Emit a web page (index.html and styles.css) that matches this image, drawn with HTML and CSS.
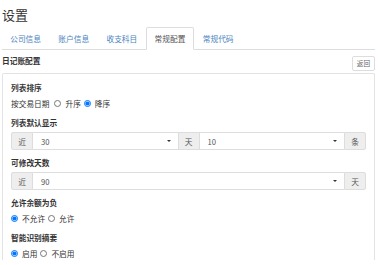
FILE: index.html
```html
<!DOCTYPE html>
<html lang="zh-CN">
<head>
  <meta charset="UTF-8" />
  <meta name="viewport" content="width=device-width, initial-scale=1.0" />
  <title>设置</title>
  <link rel="stylesheet" href="styles.css">
</head>
<body>
  <div class="page">
    <h3 class="page-title">设置</h3>
    <ul class="tabs">
      <li><a href="#">公司信息</a></li>
      <li><a href="#">账户信息</a></li>
      <li><a href="#">收支科目</a></li>
      <li class="active"><a href="#">常规配置</a></li>
      <li><a href="#">常规代码</a></li>
    </ul>
    <div class="section-head">
      <span class="section-title">日记账配置</span>
      <button class="btn">返回</button>
    </div>
    <div class="panel">
      <div class="group">
        <div class="group-label">列表排序</div>
        <div class="radios">
          <span class="radio-prefix">按交易日期</span>
          <label class="radio"><input type="radio" name="sort">升序</label>
          <label class="radio"><input type="radio" name="sort" checked>降序</label>
        </div>
      </div>
      <div class="group">
        <div class="group-label">列表默认显示</div>
        <div class="input-group">
          <span class="addon">近</span>
          <div class="select"><span>30</span><span class="caret"></span></div>
          <span class="addon">天</span>
          <div class="select"><span>10</span><span class="caret"></span></div>
          <span class="addon">条</span>
        </div>
      </div>
      <div class="group">
        <div class="group-label">可修改天数</div>
        <div class="input-group">
          <span class="addon">近</span>
          <div class="select"><span>90</span><span class="caret"></span></div>
          <span class="addon">天</span>
        </div>
      </div>
      <div class="group">
        <div class="group-label">允许余额为负</div>
        <div class="radios">
          <label class="radio"><input type="radio" name="negative" checked>不允许</label>
          <label class="radio"><input type="radio" name="negative">允许</label>
        </div>
      </div>
      <div class="group">
        <div class="group-label">智能识别摘要</div>
        <div class="radios">
          <label class="radio"><input type="radio" name="smart" checked>启用</label>
          <label class="radio"><input type="radio" name="smart">不启用</label>
        </div>
      </div>
    </div>
  </div>
</body>
</html>
```

FILE: styles.css
```css
body {
  margin: 0;
  font-family: "Noto Sans CJK SC", "Noto Sans", sans-serif;
  font-size: 7.7px;
  color: #333;
  background-color: white;
}
.page {
  padding: 0 3px 0 2px;
}
.page-title {
  margin: 7px 0 5px;
  font-size: 13px;
  line-height: 15px;
  font-weight: normal;
  color: #333;
}
.tabs {
  display: flex;
  list-style: none;
  margin: 0;
  padding: 0;
  border-bottom: 1px solid #ddd;
}
.tabs li {
  margin-right: 1px;
  margin-bottom: -1px;
}
.tabs a {
  display: block;
  padding: 5px 7.2px;
  line-height: 11px;
  border: 1px solid transparent;
  border-radius: 2px 2px 0 0;
  color: #4a84c0;
  text-decoration: none;
}
.tabs li.active a {
  color: #555;
  background-color: white;
  border-color: #ddd #ddd transparent;
}
.section-head {
  display: flex;
  justify-content: space-between;
  align-items: flex-start;
  padding-top: 5px;
  margin-bottom: 2px;
}
.section-title {
  font-weight: bold;
  line-height: 11px;
}
.btn {
  margin-top: 1px;
  padding: 2px 4px;
  font-family: inherit;
  font-size: 6.6px;
  line-height: 9px;
  color: #666;
  background-color: white;
  border: 1px solid #ddd;
  border-radius: 2px;
}
.panel {
  border: 1px solid #e3e3e3;
  border-bottom: none;
  border-radius: 2px 2px 0 0;
  padding: 8px 8px 0;
  background-color: white;
}
.group {
  margin-bottom: 7px;
}
.group-label {
  font-weight: bold;
  line-height: 11px;
  margin-bottom: 4px;
}
.radios {
  display: flex;
  align-items: center;
  height: 13px;
}
.radio-prefix {
  margin-right: 5px;
}
.radio {
  display: inline-flex;
  align-items: center;
  margin-right: 3px;
}
.radio input {
  width: 7px;
  height: 7px;
  margin: 0 4px 0 0;
}
.input-group {
  display: flex;
  height: 18px;
}
.addon {
  display: flex;
  align-items: center;
  justify-content: center;
  width: 20px;
  flex: none;
  background-color: #eee;
  color: #555;
  border: 1px solid #ddd;
}
.addon:first-child {
  border-radius: 2px 0 0 2px;
}
.addon:last-child {
  border-radius: 0 2px 2px 0;
}
.select {
  flex: 1;
  display: flex;
  align-items: center;
  justify-content: space-between;
  padding: 0 7px 0 8px;
  border-top: 1px solid #ddd;
  border-bottom: 1px solid #ddd;
  color: #555;
}
.caret {
  width: 0;
  height: 0;
  border-left: 2px solid transparent;
  border-right: 2px solid transparent;
  border-top: 2px solid #333;
}
```
